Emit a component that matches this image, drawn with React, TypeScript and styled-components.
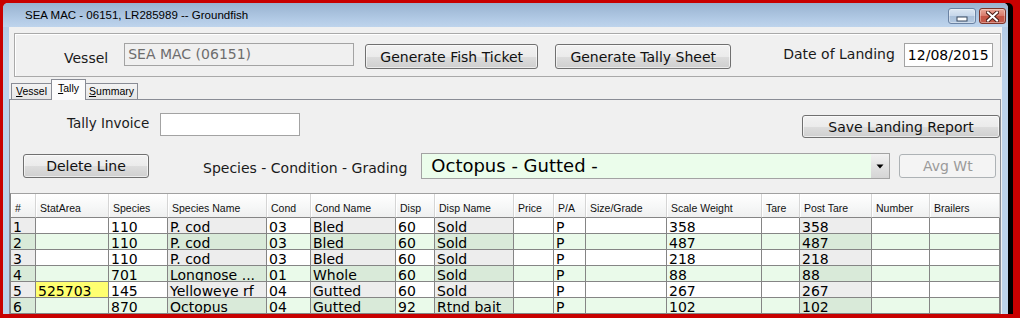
import React from "react";
import styled, { createGlobalStyle } from "styled-components";

const UI = `"DejaVu Sans", Verdana, sans-serif`;
const SMALL = `"Liberation Sans", Arial, sans-serif`;

const GlobalStyle = createGlobalStyle`
  html, body {
    margin: 0;
    padding: 0;
    background: #c80000;
  }
  body {
    width: 1020px;
    height: 318px;
    overflow: hidden;
  }
`;

const Desktop = styled.div`
  width: 1020px;
  height: 318px;
  box-sizing: border-box;
  padding: 3px 0 4px 3px;
  background: #c80000;
  display: flex;
`;

const Window = styled.div`
  width: 1005px;
  display: flex;
  flex-direction: column;
  background: linear-gradient(#aec6e2, #bdd3eb 60px, #bcd3ea);
  border-radius: 5px 5px 0 0;
  overflow: hidden;
  box-shadow: 5px 0 0 #000;
`;

const TitleBar = styled.div`
  height: 24px;
  flex: none;
  display: flex;
  align-items: flex-start;
  padding-left: 22px;
  background: linear-gradient(#98b2d0, #b3cbe6 70%, #bed4ec);
`;

const TitleText = styled.span`
  font: 11.5px ${SMALL};
  color: #000;
  line-height: 24px;
`;

const TitleButtons = styled.div`
  margin-left: auto;
  margin-right: 2px;
  margin-top: 5px;
  display: flex;
  gap: 3px;
`;

const CaptionButton = styled.div<{ $close?: boolean }>`
  width: ${(p) => (p.$close ? 27 : 28)}px;
  height: 16px;
  box-sizing: border-box;
  border-radius: 3px;
  border: 1px solid ${(p) => (p.$close ? "#7d3328" : "#6a82a3")};
  background: ${(p) =>
    p.$close
      ? "linear-gradient(#e9a898, #d8786a 50%, #c65444 51%, #c35a4b)"
      : "linear-gradient(#dce7f3, #c5d6ea 50%, #aac0da 51%, #b4c9e1)"};
  box-shadow: inset 0 0 0 1px rgba(255, 255, 255, 0.35);
  display: flex;
  align-items: center;
  justify-content: center;
`;

const Content = styled.div`
  flex: 1;
  min-height: 0;
  margin: 0 6px;
  background: #f0f0f0;
  display: flex;
  flex-direction: column;
  overflow: hidden;
`;

const GroupBox = styled.div`
  height: 44px;
  flex: none;
  box-sizing: border-box;
  margin: 6px 1px 0 5px;
  border: 1px solid #a9a9a9;
  box-shadow: inset 1px 1px 0 #fff;
  display: flex;
  align-items: flex-start;
`;

const Label = styled.span<{ $ml?: number; $mt?: number; $size?: number }>`
  font-family: ${UI};
  font-size: ${(p) => p.$size ?? 14}px;
  line-height: 17px;
  color: #1a1a1a;
  white-space: nowrap;
  margin-left: ${(p) => p.$ml ?? 0}px;
  margin-top: ${(p) => p.$mt ?? 0}px;
`;

const TextBox = styled.div<{
  $w: number;
  $h: number;
  $ml?: number;
  $mt?: number;
  $disabled?: boolean;
}>`
  width: ${(p) => p.$w}px;
  height: ${(p) => p.$h}px;
  box-sizing: border-box;
  margin-left: ${(p) => p.$ml ?? 0}px;
  margin-top: ${(p) => p.$mt ?? 0}px;
  border: 1px solid #a3a3a3;
  background: ${(p) => (p.$disabled ? "#f0f0f0" : "#fff")};
  color: ${(p) => (p.$disabled ? "#6d6d6d" : "#000")};
  font: 14px ${UI};
  line-height: ${(p) => p.$h - 2}px;
  padding-left: 3px;
  white-space: nowrap;
  overflow: hidden;
`;

const Button = styled.button<{
  $w: number;
  $h: number;
  $ml?: number;
  $mt?: number;
  $auto?: boolean;
}>`
  width: ${(p) => p.$w}px;
  height: ${(p) => p.$h}px;
  box-sizing: border-box;
  margin: ${(p) => p.$mt ?? 0}px 0 0 ${(p) => (p.$auto ? "auto" : `${p.$ml ?? 0}px`)};
  padding: 0;
  border: 1px solid #707070;
  border-radius: 3px;
  background: linear-gradient(#f2f2f2, #ebebeb 50%, #dddddd 51%, #cfcfcf);
  box-shadow: inset 0 0 0 1px rgba(255, 255, 255, 0.6);
  font: 14px ${UI};
  color: #111;
  white-space: nowrap;

  &:disabled {
    border-color: #adb2b5;
    background: #f4f4f4;
    box-shadow: none;
    color: #9a9a9a;
  }
`;

const TabStrip = styled.div`
  height: 20px;
  flex: none;
  margin-top: 2px;
  padding-left: 2px;
  display: flex;
  align-items: flex-end;
`;

const Tab = styled.div<{ $w: number; $active?: boolean; $first?: boolean }>`
  width: ${(p) => p.$w}px;
  height: ${(p) => (p.$active ? 21 : 16)}px;
  box-sizing: border-box;
  margin-left: ${(p) => (p.$first ? 0 : -1)}px;
  margin-bottom: ${(p) => (p.$active ? -1 : 0)}px;
  position: relative;
  z-index: ${(p) => (p.$active ? 1 : 0)};
  border: 1px solid #898c95;
  border-bottom: none;
  background: ${(p) =>
    p.$active ? "#fcfcfc" : "linear-gradient(#f3f3f3, #e6e6e6)"};
  font: 10.5px ${SMALL};
  color: #000;
  text-align: center;
  line-height: ${(p) => (p.$active ? 16 : 15)}px;

  u {
    text-decoration: underline;
  }
`;

const TabPage = styled.div`
  flex: 1;
  min-height: 0;
  border: 1px solid #898c95;
  border-bottom: none;
  margin-right: 1px;
  padding-top: 13px;
  display: flex;
  flex-direction: column;
`;

const FormRow = styled.div<{ $h: number; $mt?: number }>`
  height: ${(p) => p.$h}px;
  flex: none;
  margin-top: ${(p) => p.$mt ?? 0}px;
  display: flex;
  align-items: flex-start;
`;

const Combo = styled.div<{ $w: number; $ml: number }>`
  width: ${(p) => p.$w}px;
  height: 26px;
  box-sizing: border-box;
  margin-left: ${(p) => p.$ml}px;
  border: 1px solid #a3a3a3;
  background: #ebfdeb;
  display: flex;
`;

const ComboText = styled.div`
  flex: 1;
  padding-left: 9px;
  font: 18px ${UI};
  line-height: 24px;
  color: #000;
`;

const ComboArrow = styled.div`
  width: 18px;
  background: linear-gradient(#f2f2f2, #e2e2e2 50%, #d5d5d5);
  display: flex;
  align-items: center;
  justify-content: center;
`;

const Grid = styled.div<{ $cols: string }>`
  margin-top: 14px;
  display: grid;
  grid-template-columns: ${(p) => p.$cols};
  width: max-content;
  border-top: 1px solid #a0a0a0;
  border-left: 1px solid #858585;
`;

const HeadCell = styled.div`
  height: 24px;
  box-sizing: border-box;
  padding: 4px 0 0 4px;
  border-right: 1px solid #d5d5d5;
  border-bottom: 1px solid #858585;
  background: linear-gradient(#ffffff, #f7f8f8 50%, #eff0f0);
  box-shadow: inset 1px 0 0 #fff;
  font: 10.5px ${SMALL};
  line-height: 20px;
  color: #111;
  white-space: nowrap;
  overflow: hidden;
`;

const Cell = styled.div<{ $bg: string }>`
  height: 16px;
  box-sizing: border-box;
  padding-left: 2px;
  border-right: 1px solid #858585;
  border-bottom: 1px solid #858585;
  background: ${(p) => p.$bg};
  font: 14px ${UI};
  line-height: 18px;
  color: #000;
  white-space: nowrap;
  overflow: hidden;
`;

type Row = Record<string, string>;

const columns = [
  { key: "n", title: "#", width: 25, ro: true },
  { key: "stat", title: "StatArea", width: 73 },
  { key: "sp", title: "Species", width: 59 },
  { key: "spName", title: "Species Name", width: 99, ro: true },
  { key: "cond", title: "Cond", width: 44 },
  { key: "condName", title: "Cond Name", width: 85, ro: true },
  { key: "disp", title: "Disp", width: 39 },
  { key: "dispName", title: "Disp Name", width: 79, ro: true },
  { key: "price", title: "Price", width: 40 },
  { key: "pa", title: "P/A", width: 32 },
  { key: "size", title: "Size/Grade", width: 81 },
  { key: "scale", title: "Scale Weight", width: 95 },
  { key: "tare", title: "Tare", width: 38 },
  { key: "post", title: "Post Tare", width: 72, ro: true },
  { key: "num", title: "Number", width: 58 },
  { key: "brail", title: "Brailers", width: 70 },
];

const line = (
  n: string,
  stat: string,
  sp: string,
  spName: string,
  cond: string,
  condName: string,
  disp: string,
  dispName: string,
  weight: string
): Row => ({
  n,
  stat,
  sp,
  spName,
  cond,
  condName,
  disp,
  dispName,
  price: "",
  pa: "P",
  size: "",
  scale: weight,
  tare: "",
  post: weight,
  num: "",
  brail: "",
});

const rows: Row[] = [
  line("1", "", "110", "P. cod", "03", "Bled", "60", "Sold", "358"),
  line("2", "", "110", "P. cod", "03", "Bled", "60", "Sold", "487"),
  line("3", "", "110", "P. cod", "03", "Bled", "60", "Sold", "218"),
  line("4", "", "701", "Longnose ...", "01", "Whole", "60", "Sold", "88"),
  line("5", "525703", "145", "Yelloweye rf", "04", "Gutted", "60", "Sold", "267"),
  line("6", "", "870", "Octopus", "04", "Gutted", "92", "Rtnd bait", "102"),
];

const cellBg = (even: boolean, ro?: boolean, flagged?: boolean) => {
  if (flagged) return "#ffff70";
  if (ro) return even ? "#d9ead9" : "#ededed";
  return even ? "#eafaea" : "#ffffff";
};

const MinimizeIcon = () => (
  <svg width="12" height="14" viewBox="0 0 12 14">
    <rect x="1" y="8" width="10" height="4" fill="#fff" stroke="#3a4a60" strokeWidth="1" />
  </svg>
);

const CloseIcon = () => (
  <svg width="13" height="11" viewBox="0 0 13 11">
    <path d="M2 1.5 L11 9.5 M11 1.5 L2 9.5" stroke="#4a1c16" strokeWidth="4" strokeLinecap="square" />
    <path d="M2 1.5 L11 9.5 M11 1.5 L2 9.5" stroke="#fff" strokeWidth="2" strokeLinecap="square" />
  </svg>
);

const App = () => {
  const cols = columns.map((c) => `${c.width}px`).join(" ");
  return (
    <Desktop>
      <GlobalStyle />
      <Window>
        <TitleBar>
          <TitleText>SEA MAC - 06151, LR285989 -- Groundfish</TitleText>
          <TitleButtons>
            <CaptionButton>
              <MinimizeIcon />
            </CaptionButton>
            <CaptionButton $close>
              <CloseIcon />
            </CaptionButton>
          </TitleButtons>
        </TitleBar>
        <Content>
          <GroupBox>
            <Label $ml={49} $mt={16}>
              Vessel
            </Label>
            <TextBox $w={230} $h={23} $ml={16} $mt={9} $disabled>
              SEA MAC (06151)
            </TextBox>
            <Button $w={173} $h={25} $ml={11} $mt={10}>
              Generate Fish Ticket
            </Button>
            <Button $w={176} $h={25} $ml={17} $mt={10}>
              Generate Tally Sheet
            </Button>
            <Label $ml={52} $mt={12}>
              Date of Landing
            </Label>
            <TextBox $w={89} $h={24} $ml={9} $mt={9}>
              12/08/2015
            </TextBox>
          </GroupBox>
          <TabStrip>
            <Tab $w={41} $first>
              <u>V</u>essel
            </Tab>
            <Tab $w={35} $active>
              <u>T</u>ally
            </Tab>
            <Tab $w={53}>
              <u>S</u>ummary
            </Tab>
          </TabStrip>
          <TabPage>
            <FormRow $h={25}>
              <Label $ml={57} $mt={2} $size={13.5}>
                Tally Invoice
              </Label>
              <TextBox $w={140} $h={23} $ml={11} />
              <Button $w={198} $h={23} $mt={2} $auto>
                Save Landing Report
              </Button>
            </FormRow>
            <FormRow $h={26} $mt={15}>
              <Button $w={126} $h={24} $ml={13} $mt={1}>
                Delete Line
              </Button>
              <Label $ml={54} $mt={7}>
                Species - Condition - Grading
              </Label>
              <Combo $w={469} $ml={14}>
                <ComboText>Octopus - Gutted -</ComboText>
                <ComboArrow>
                  <svg width="8" height="5" viewBox="0 0 8 5">
                    <path d="M0.5 0.5 L7.5 0.5 L4 4.5 Z" fill="#000" />
                  </svg>
                </ComboArrow>
              </Combo>
              <Button $w={97} $h={24} $ml={9} $mt={1} disabled>
                Avg Wt
              </Button>
            </FormRow>
            <Grid $cols={cols}>
              {columns.map((c) => (
                <HeadCell key={c.key}>{c.title}</HeadCell>
              ))}
              {rows.map((r, i) =>
                columns.map((c) => (
                  <Cell
                    key={`${i}-${c.key}`}
                    $bg={cellBg(i % 2 === 1, c.ro, c.key === "stat" && r.stat !== "")}
                  >
                    {r[c.key]}
                  </Cell>
                ))
              )}
            </Grid>
          </TabPage>
        </Content>
      </Window>
    </Desktop>
  );
};

export default App;
